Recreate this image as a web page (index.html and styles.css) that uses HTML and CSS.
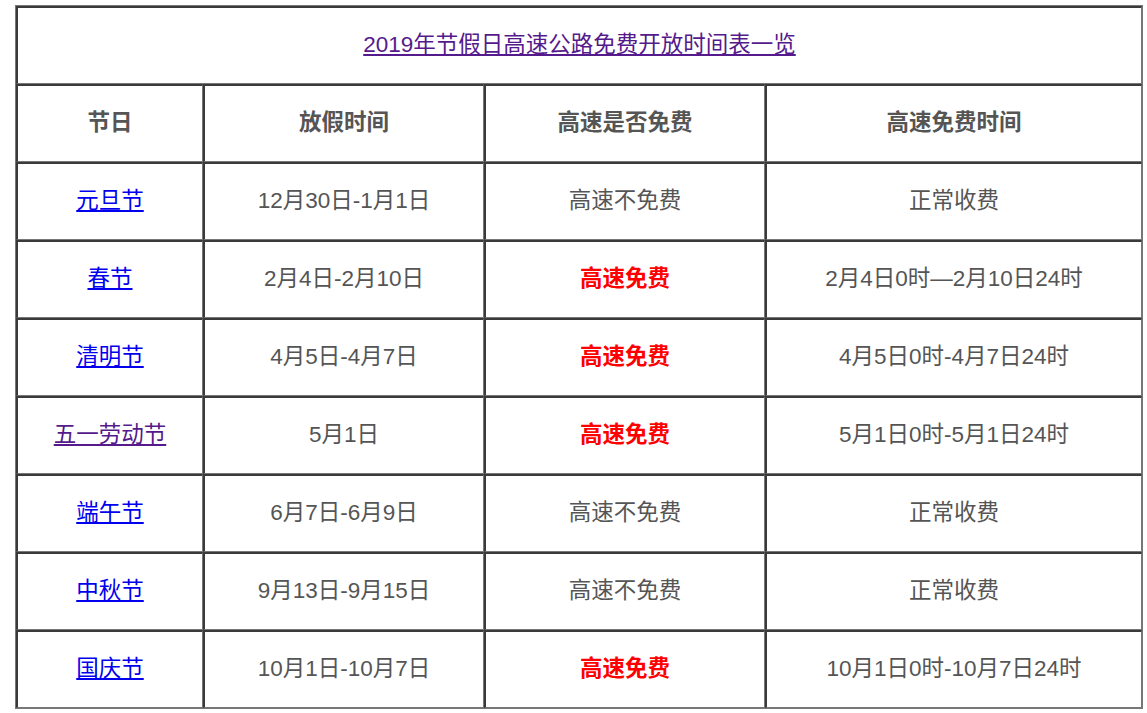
FILE: index.html
```html
<!DOCTYPE html>
<html lang="zh-CN">
<head>
<meta charset="utf-8">
<title>2019年节假日高速公路免费开放时间表一览</title>
<link rel="stylesheet" href="styles.css">
</head>
<body>
<div class="wrap">
<table class="sched">
<colgroup><col class="c1"><col class="c2"><col class="c3"><col class="c4"></colgroup>
<tr><td colspan="4"><a class="visited" href="#">2019年节假日高速公路免费开放时间表一览</a></td></tr>
<tr class="head"><td>节日</td><td>放假时间</td><td>高速是否免费</td><td>高速免费时间</td></tr>
<tr><td><a href="#">元旦节</a></td><td>12月30日-1月1日</td><td>高速不免费</td><td>正常收费</td></tr>
<tr><td><a href="#">春节</a></td><td>2月4日-2月10日</td><td class="free">高速免费</td><td>2月4日0时—2月10日24时</td></tr>
<tr><td><a href="#">清明节</a></td><td>4月5日-4月7日</td><td class="free">高速免费</td><td>4月5日0时-4月7日24时</td></tr>
<tr><td><a class="visited" href="#">五一劳动节</a></td><td>5月1日</td><td class="free">高速免费</td><td>5月1日0时-5月1日24时</td></tr>
<tr><td><a href="#">端午节</a></td><td>6月7日-6月9日</td><td>高速不免费</td><td>正常收费</td></tr>
<tr><td><a href="#">中秋节</a></td><td>9月13日-9月15日</td><td>高速不免费</td><td>正常收费</td></tr>
<tr><td><a href="#">国庆节</a></td><td>10月1日-10月7日</td><td class="free">高速免费</td><td>10月1日0时-10月7日24时</td></tr>
</table>
</div>
</body>
</html>
```
FILE: styles.css
```css
html, body { margin: 0; padding: 0; background: #fff; }
.wrap { padding: 5px 0 0 15px; }
.sched {
  width: 1126px;
  table-layout: fixed;
  border-collapse: separate;
  border-spacing: 0;
  border: 1px solid #777;
  font-family: "Liberation Sans", "Noto Sans CJK SC", sans-serif;
  font-size: 22.5px;
  line-height: 1.2;
  color: #555;
}
.c1 { width: 187px; }
.c2 { width: 281px; }
.c3 { width: 281px; }
.c4 { width: 377px; }
.sched td {
  height: 78px;
  padding: 0 0 2px 0;
  box-sizing: border-box;
  text-align: center;
  vertical-align: middle;
  border-style: solid;
  border-width: 2px 1px 1px 2px;
  border-color: #3a3a3a #777 #777 #3a3a3a;
}
.sched a { color: #0000ee; text-decoration: underline; }
.sched a.visited { color: #551a8b; }
.head td { font-weight: bold; }
.sched td.free { color: #f00; font-weight: bold; }
```
